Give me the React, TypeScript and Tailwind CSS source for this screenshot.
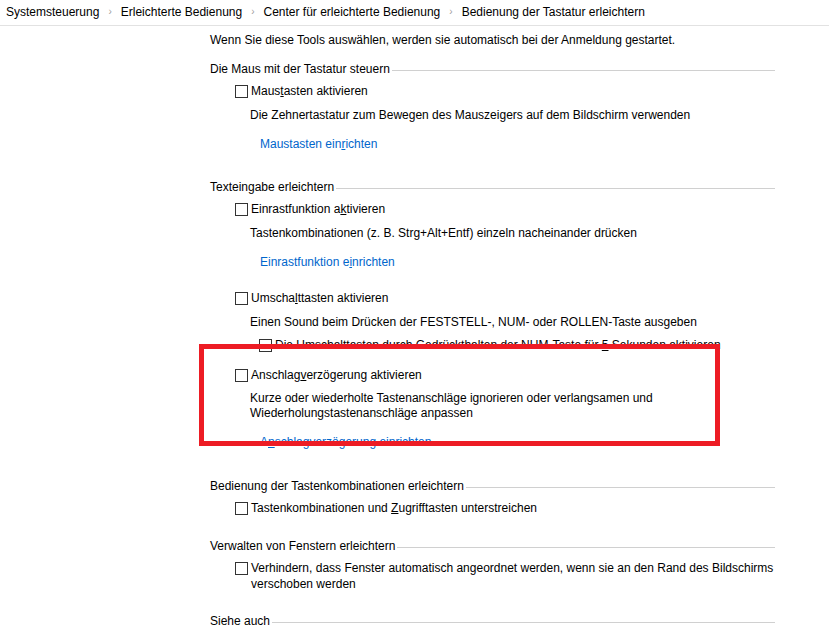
import React from "react";

function CheckBox() {
  return <span className="block w-[13px] h-[13px] mt-[2px] border border-[#333333] bg-white shrink-0" />;
}

function SectionTitle({ title, className }: { title: string; className?: string }) {
  return (
    <div className={`flex items-center h-[16px] leading-[16px] ${className ?? ""}`}>
      <span className="whitespace-nowrap">{title}</span>
      <span className="flex-1 h-px bg-[#d0d0d0] ml-[2px] mt-[2px]" />
    </div>
  );
}

function Option({
  children,
  className,
  indent = "ml-[25px]",
  leading = "leading-[16px]",
}: {
  children: React.ReactNode;
  className?: string;
  indent?: string;
  leading?: string;
}) {
  return (
    <div className={`flex items-start whitespace-nowrap ${indent} ${leading} ${className ?? ""}`}>
      <CheckBox />
      <span className="ml-[3px]">{children}</span>
    </div>
  );
}

function Link({ children, className }: { children: React.ReactNode; className?: string }) {
  return <div className={`ml-[50px] h-[16px] leading-[16px] text-[#0066cc] ${className ?? ""}`}>{children}</div>;
}

function Desc({ children, className }: { children: React.ReactNode; className?: string }) {
  return <div className={`ml-[40px] whitespace-nowrap ${className ?? ""}`}>{children}</div>;
}

const crumbs = [
  "Systemsteuerung",
  "Erleichterte Bedienung",
  "Center für erleichterte Bedienung",
  "Bedienung der Tastatur erleichtern",
];

export default function App() {
  return (
    <div
      className="relative w-[829px] h-[632px] overflow-hidden bg-white text-[12px] text-black"
      style={{ fontFamily: '"Liberation Sans", Arial, sans-serif' }}
    >
      <div className="h-[26px] border-b border-[#e2e2e2] flex items-center pl-[6px] pb-[2px]">
        {crumbs.map((c, i) => (
          <React.Fragment key={c}>
            {i > 0 && <span className="mx-[9px] text-[#a0a0a0] text-[10px]">›</span>}
            <span>{c}</span>
          </React.Fragment>
        ))}
      </div>

      <div className="ml-[210px] w-[565px]">
        <div className="mt-[6px] h-[16px] leading-[16px]">
          Wenn Sie diese Tools auswählen, werden sie automatisch bei der Anmeldung gestartet.
        </div>

        <SectionTitle title="Die Maus mit der Tastatur steuern" className="mt-[13px]" />
        <Option className="mt-[6px]">
          Maus<u>t</u>asten aktivieren
        </Option>
        <Desc className="mt-[8px] leading-[16px]">
          Die Zehnertastatur zum Bewegen des Mauszeigers auf dem Bildschirm verwenden
        </Desc>
        <Link className="mt-[13px]">
          Maustasten ein<u>r</u>ichten
        </Link>

        <SectionTitle title="Texteingabe erleichtern" className="mt-[27px]" />
        <Option className="mt-[6px]">
          Einrastfunktion a<u>k</u>tivieren
        </Option>
        <Desc className="mt-[8px] leading-[16px]">
          Tastenkombinationen (z. B. Strg+Alt+Entf) einzeln nacheinander drücken
        </Desc>
        <Link className="mt-[13px]">
          Einrastfunktion e<u>i</u>nrichten
        </Link>

        <Option className="mt-[20px]">
          Umscha<u>l</u>ttasten aktivieren
        </Option>
        <Desc className="mt-[8px] leading-[16px]">
          Einen Sound beim Drücken der FESTSTELL-, NUM- oder ROLLEN-Taste ausgeben
        </Desc>
        <Option className="mt-[7px]" indent="ml-[49px]">
          Die Umschalttasten durch Gedrückthalten der NUM-Taste für <u>5</u> Sekunden aktivieren
        </Option>

        <Option className="mt-[14px]">
          Anschlag<u>v</u>erzögerung aktivieren
        </Option>
        <Desc className="mt-[8px] leading-[15px]">
          Kurze oder wiederholte Tastenanschläge ignorieren oder verlangsamen und
          <br />
          Wiederholungstastenanschläge anpassen
        </Desc>
        <Link className="mt-[13px]">
          A<u>n</u>schlagverzögerung einrichten
        </Link>

        <SectionTitle title="Bedienung der Tastenkombinationen erleichtern" className="mt-[28px]" />
        <Option className="mt-[6px]">
          Tastenkombinationen und <u>Z</u>ugrifftasten unterstreichen
        </Option>

        <SectionTitle title="Verwalten von Fenstern erleichtern" className="mt-[22px]" />
        <Option className="mt-[6px]" leading="leading-[16px]">
          Verhindern, dass Fenster automatisch angeordnet werden, wenn sie an den Rand des Bildschirms
          <br />
          verschoben werden
        </Option>

        <SectionTitle title="Siehe auch" className="mt-[21px]" />
      </div>

      {/* annotation box */}
      <div className="absolute left-[199px] top-[344px] w-[521px] h-[102px] border-[5px] border-[#ed1c24]" />
    </div>
  );
}
